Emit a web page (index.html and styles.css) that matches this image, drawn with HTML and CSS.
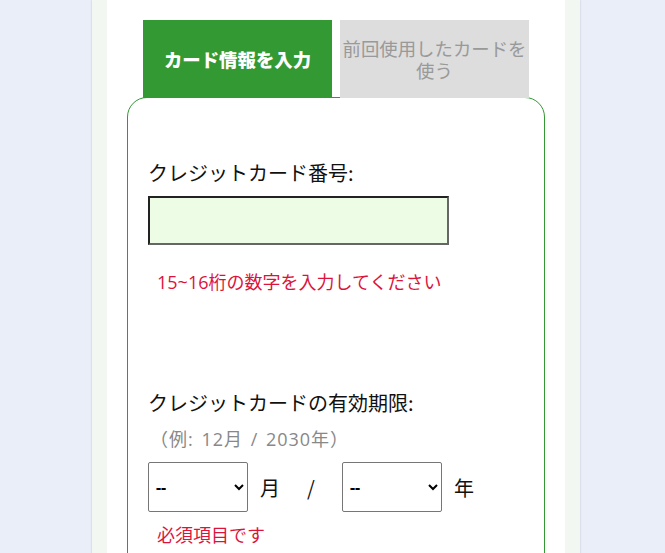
FILE: index.html
```html
<!DOCTYPE html>
<html lang="ja">
<head>
<meta charset="utf-8">
<title>カード情報</title>
<link rel="stylesheet" href="styles.css">
</head>
<body>
<div class="page">
  <div class="sheet">
    <div class="tabs">
      <div class="tab tab-active">カード情報を入力</div>
      <div class="tab tab-inactive">前回使用したカードを使う</div>
    </div>
    <div class="card">
      <div class="field">
        <label class="label" for="cardno">クレジットカード番号:</label>
        <input class="card-input" id="cardno" type="text">
        <p class="error error-number">15~16桁の数字を入力してください</p>
      </div>
      <div class="field field-expiry">
        <label class="label">クレジットカードの有効期限:</label>
        <p class="hint">（例: 12月 / 2030年）</p>
        <div class="expiry-row">
          <select class="sel"><option>--</option></select>
          <span class="unit">月</span>
          <span class="slash">/</span>
          <select class="sel"><option>--</option></select>
          <span class="unit">年</span>
        </div>
        <p class="error error-expiry">必須項目です</p>
      </div>
    </div>
  </div>
</div>
</body>
</html>
```

FILE: styles.css
```css
html, body {
  margin: 0;
  overflow: hidden;
}
body {
  background: #e9eef8;
  font-family: "Noto Sans CJK JP", "Noto Sans", sans-serif;
}
.page {
  width: 488px;
  margin-left: 92px;
  padding: 0 15px;
  box-sizing: border-box;
  background: #f2f7f2;
  box-shadow: 0 0 2px rgba(0, 0, 0, 0.18);
  min-height: 100vh;
}
.sheet {
  background: #ffffff;
  padding: 20px 20px 0;
}
.tabs {
  display: flex;
  gap: 8px;
  padding: 0 16px;
  position: relative;
  z-index: 1;
  margin-bottom: -1px;
}
.tab {
  width: 189px;
  height: 78px;
  display: flex;
  align-items: center;
  justify-content: center;
  text-align: center;
  font-size: 18.4px;
  line-height: 22px;
}
.tab-active {
  background: #339933;
  color: #ffffff;
  font-weight: 900;
}
.tab-inactive {
  background: #dddddd;
  color: #999999;
}
.card {
  border: 1px solid #339933;
  border-radius: 20px;
  padding: 60px 20px 200px;
}
.label {
  display: block;
  font-size: 20px;
  line-height: 30px;
  color: #111111;
}
.card-input {
  display: block;
  margin: 8px 0 0;
  width: 301px;
  height: 49px;
  box-sizing: border-box;
  border: 2px solid;
  border-color: #222222 #666666 #666666 #222222;
  background: #edfde5;
  padding: 0 6px;
  font-size: 18px;
}
.error {
  margin: 24px 0 0;
  padding-left: 9px;
  font-family: "Open Sans", "Noto Sans CJK JP", sans-serif;
  font-size: 18px;
  line-height: 27px;
  color: #dc143c;
}
.field-expiry {
  margin-top: 92px;
}
.hint {
  margin: 8px 0 0;
  padding-left: 2px;
  font-family: "Open Sans", "Noto Sans CJK JP", sans-serif;
  font-size: 18px;
  line-height: 27px;
  letter-spacing: 1px;
  word-spacing: 2px;
  color: #888888;
}
.expiry-row {
  display: flex;
  align-items: center;
  margin-top: 9px;
}
.sel {
  width: 100px;
  height: 50px;
  box-sizing: border-box;
  border: 1px solid #767676;
  border-radius: 2px;
  background-color: #ffffff;
  color: #000000;
  font-family: "Noto Sans", sans-serif;
  font-size: 16px;
  font-weight: bold;
  padding-left: 3px;
}
.unit {
  margin-left: 12px;
  font-size: 20px;
  color: #111111;
}
.slash {
  margin: 0 27px;
  font-size: 20px;
  color: #111111;
  width: 8px;
  text-align: center;
}
.error-expiry {
  margin-top: 10px;
}
```
